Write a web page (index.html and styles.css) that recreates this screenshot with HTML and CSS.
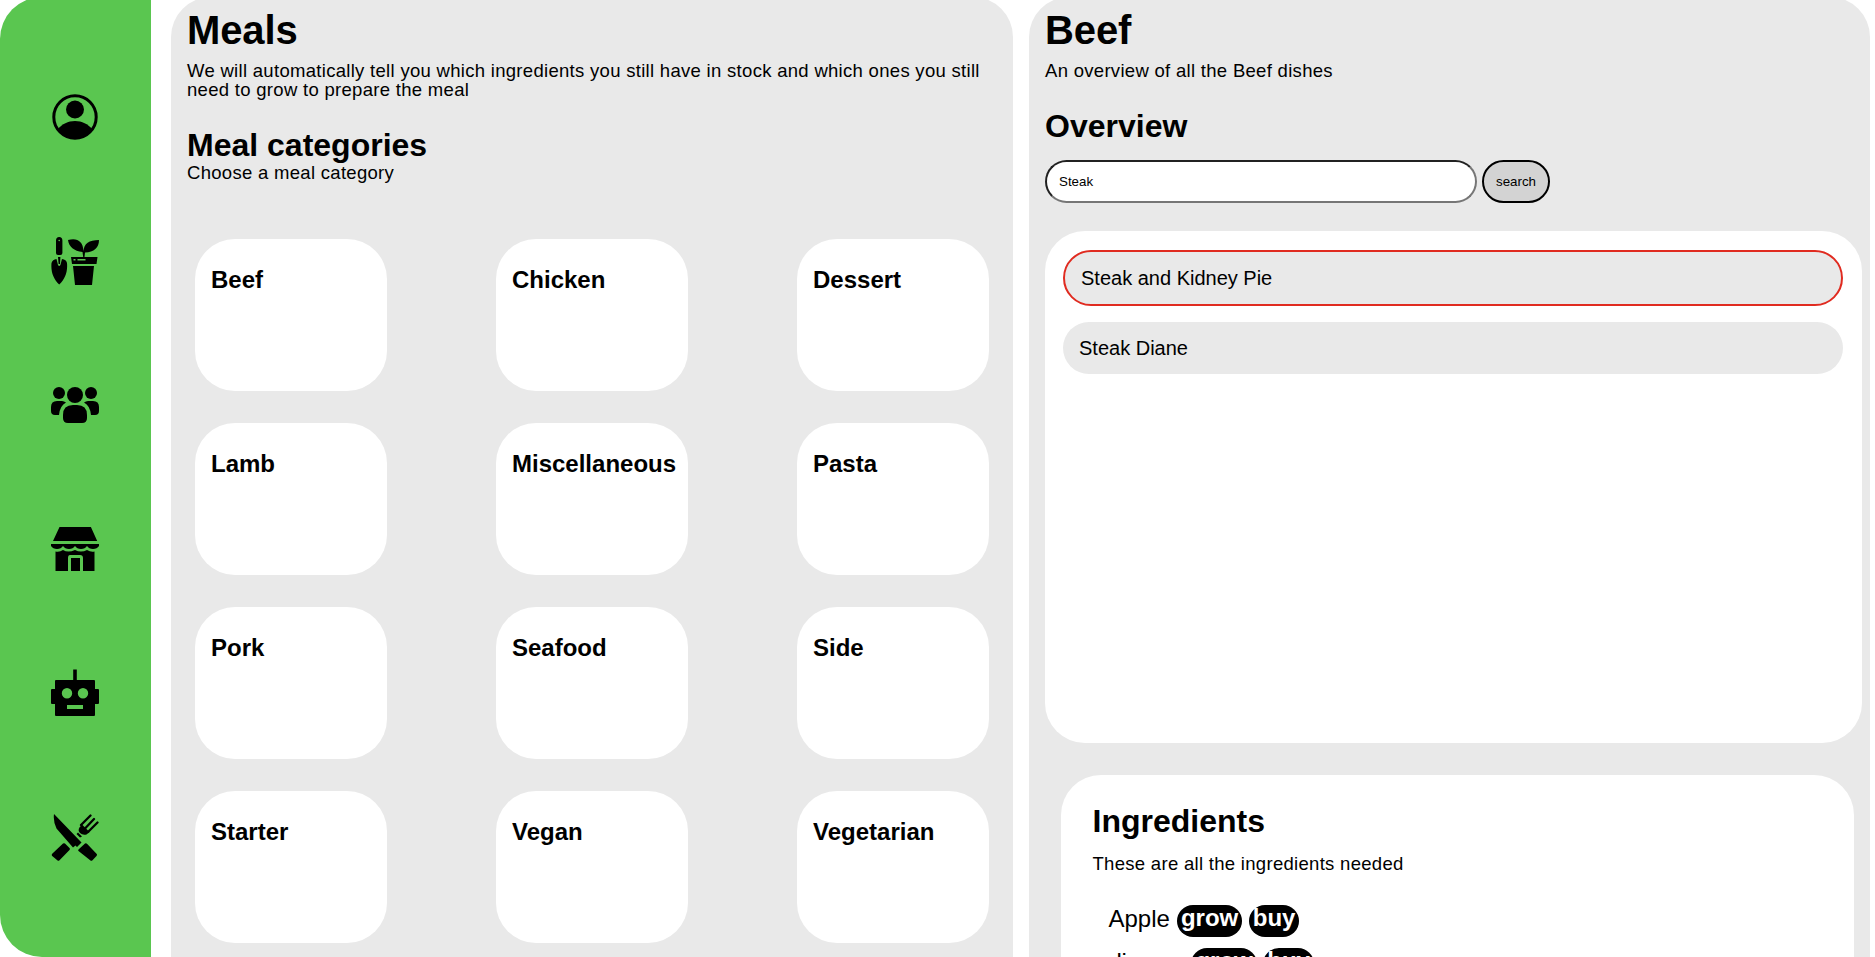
FILE: index.html
```html
<!DOCTYPE html>
<html lang="en">
<head>
<meta charset="utf-8">
<title>Meals</title>
<link rel="stylesheet" href="styles.css">
</head>
<body>
<div class="app">
  <nav class="sidebar">
    <svg class="icon" viewBox="0 0 48 48"><circle cx="24" cy="24" r="21.2" fill="none" stroke="#000" stroke-width="3"/><circle cx="24" cy="16.500" r="9"/><path d="M7 36C11 31 17 28 24 28s13 3 17 8a21 21 0 0 1-34 0z"/></svg>
    <svg class="icon" viewBox="0 0 48 48"><path d="M5 3.500q0-3.500 3.200-3.500t3.200 3.500V16q0 2-2 2H7q-2 0-2-2zM.5 26q1-3.500 5-4l1.500 6q1.200 2 2.400 0L11 22q4.300.5 5 4c.8 9-2 16-7.800 21.500C2.500 42-.3 35 .5 26zM7 20h2.400L9 27H7.600zM17 3c9-2.500 15 1 15.500 11Q33 3 48 3c0 8-5 12-14 12.500L33.500 20h-1.300L31.500 15C23 14 18 10 17 3zM20 20h26.500l-1 7H21zM22 29h21l-2 19H24z"/><circle cx="8.200" cy="3.500" r=".8" fill="#5ac650"/><path fill="#5ac650" d="M22.500 22h2v1.400h-2zM26.500 22h8v1.400h-8z"/></svg>
    <svg class="icon" viewBox="0 0 48 48"><path d="M6 20h5q2 0 4 1.500-6 3-7 12.500H4q-4 0-4-4v-4q0-6 6-6zM42 20h-5q-2 0-4 1.500 6 3 7 12.500h4q4 0 4-4v-4q0-6-6-6zM22 24h4q10 0 10 10v3q0 5-5 5H17q-5 0-5-5v-3q0-10 10-10z"/><circle cx="24" cy="14" r="8"/><circle cx="8" cy="12" r="6"/><circle cx="40" cy="12" r="6"/></svg>
    <svg class="icon" viewBox="0 0 48 48"><path d="M8.500 2h31.400l6.300 14H2zM0 19h48v2q-2 3-6 3t-6-3q-2 3-6 3t-6-3q-2 3-6 3t-6-3q-2 3-6 3t-6-3zM4.500 26.500q4 1 7.500-1.500 5 3 12 0 6 3 12 0 4 2.500 7.500 1.500V46H32V33q0-3-3-3H19q-2 0-2 3v13H4.500zM20 33h9v13h-9z"/></svg>
    <svg class="icon" viewBox="0 0 48 48"><path fill-rule="evenodd" d="M22.200 .5h3.600V11h17.200q1 0 1 1v8h3q1 0 1 1v13q0 1-1 1h-3v11q0 1-1 1H5q-1 0-1-1V35H1q-1 0-1-1V21q0-1 1-1h3v-8q0-1 1-1h17.200zM16 19a5.200 5.200 0 1 0 0 10.400A5.200 5.200 0 0 0 16 19zm16 0a5.200 5.200 0 1 0 0 10.400A5.200 5.200 0 0 0 32 19zM16 36v4h16v-4z"/></svg>
    <svg class="icon" viewBox="0 0 48 48"><path d="M3 1L30.500 29.500 26 34l-1.500-1.500-2.500 2L5.500 15.500Q2 8 3 1zM27.500 36.500L34 30.500q1-.7 2 .2l9.500 10q1 1 0 2.200l-4 4.300q-1.200 1-2.300 0L27.500 38q-.7-.7 0-1.500zM12 30.500q1-.7 2 0l4.500 4.500q.8 1 0 2L8.500 47.200q-1 1-2.200 0L1.200 43q-.9-1 0-2.200zM27 19.500l4 4-2 1-3.500-3.500z"/><path d="M28.500 14.500L31 11.500l7.500 7.500-3 2.500q-4 1-6.500-1.500t-.5-5.500z"/><path d="M39.500 2.500L30 12M43 6l-9 9.500M46.500 9.500L37 19" fill="none" stroke="#000" stroke-width="2.300" stroke-linecap="round"/></svg>
  </nav>
  <main class="panel meals">
    <h1>Meals</h1>
    <p>We will automatically tell you which ingredients you still have in stock and which ones you still need to grow to prepare the meal</p>
    <h2>Meal categories</h2>
    <p class="hint">Choose a meal category</p>
    <div class="categories">
      <div class="card">Beef</div><div class="card">Chicken</div><div class="card">Dessert</div>
      <div class="card">Lamb</div><div class="card">Miscellaneous</div><div class="card">Pasta</div>
      <div class="card">Pork</div><div class="card">Seafood</div><div class="card">Side</div>
      <div class="card">Starter</div><div class="card">Vegan</div><div class="card">Vegetarian</div>
    </div>
  </main>
  <section class="panel dishes">
    <h1>Beef</h1>
    <p>An overview of all the Beef dishes</p>
    <h2>Overview</h2>
    <form class="search"><input type="text" value="Steak"><button type="button">search</button></form>
    <div class="results">
      <div class="dish selected">Steak and Kidney Pie</div>
      <div class="dish">Steak Diane</div>
    </div>
    <div class="ingredients">
      <h2>Ingredients</h2>
      <p>These are all the ingredients needed</p>
      <ul>
        <li><span class="name">Apple</span><b>grow</b><b>buy</b></li>
        <li><span class="name">dinners</span><b>grow</b><b>buy</b></li>
      </ul>
    </div>
  </section>
</div>
</body>
</html>
```

FILE: styles.css
```css
* { box-sizing: border-box; }
body { margin: 0; background: #fff; color: #000; font-family: "Liberation Sans", Arial, sans-serif; overflow: hidden; }
.app { display: flex; height: 957px; overflow: hidden; }
h1, h2, p, ul { margin: 0; padding: 0; font-weight: normal; }
h1 { font-size: 40px; line-height: 40px; font-weight: bold; letter-spacing: -0.1px; }
h2 { font-size: 32px; line-height: 32px; font-weight: bold; }
p { font-size: 18.5px; line-height: 19px; letter-spacing: 0.3px; }

.sidebar { width: 151px; flex: none; margin-top: -3px; height: 960px; padding: 96px 0 0 51px; background: #5ac650; border-radius: 42px 0 0 42px; display: flex; flex-direction: column; gap: 96px; }
.icon { width: 48px; height: 48px; flex: none; display: block; }

.panel { background: #e9e9e9; margin-top: -3px; height: 1000px; flex: none; border-radius: 40px 40px 0 0; padding: 13px 16px 0; }
.meals { width: 842px; margin-left: 20px; }
.dishes { width: 841px; margin-left: 16px; }
.panel > h1 + p { margin-top: 11px; }
.panel > h2 { margin-top: 30px; }
.panel > .hint { margin-top: 2px; }

.categories { display: grid; grid-template-columns: repeat(3, 192px); column-gap: 109px; row-gap: 32px; margin: 57px 0 0 8px; }
.card { height: 152px; background: #fff; border-radius: 40px; padding: 28px 16px 0; font-size: 24px; line-height: 26px; font-weight: bold; }

.search { display: flex; gap: 5px; margin-top: 18px; }
.search input, .search button { height: 43px; border-radius: 22px; font: 13.333px "Liberation Sans", Arial, sans-serif; color: #000; padding: 0 12px; }
.search input { width: 432px; background: #fff; border: 2px inset #767676; }
.search button { width: 68px; background: #d3d3d3; border: 2px solid #000; padding: 0; }

.results { width: 817px; height: 512px; margin-top: 28px; background: #fff; border-radius: 40px; padding: 19px 19px 0 18px; }
.dish { height: 52px; border-radius: 28px; background: #e9e9e9; margin-bottom: 16px; padding: 0 16px; font-size: 20px; line-height: 52px; }
.dish.selected { height: 56px; border: 2px solid #e02b20; }

.ingredients { width: 793px; height: 300px; margin: 32px 0 0 16px; background: #fff; border-radius: 40px; padding: 30px 31.5px; }
.ingredients p { margin-top: 17px; }
ul { list-style: none; margin: 32px 0 0 16px; }
li { display: flex; height: 32px; margin-bottom: 11px; font-size: 24px; line-height: 26px; }
.name { line-height: 28px; margin-right: 7px; }
li + li .name { letter-spacing: -0.4px; }
b { background: #000; color: #fff; border-radius: 16px; padding: 0 4px; margin-right: 6.5px; height: 32px; }
```
